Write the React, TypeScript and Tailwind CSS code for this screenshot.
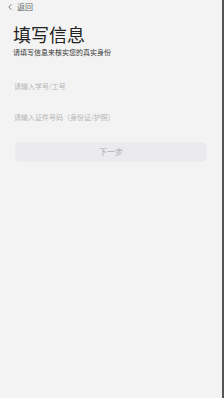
import { ChevronLeft } from "lucide-react";

export default function App() {
  return (
    <div
      className="flex h-[398px] w-[224px] flex-col border-r-2 border-r-[#555] bg-[#f3f3f3]"
      style={{ fontFamily: '"Noto Sans CJK SC", "Noto Sans", sans-serif' }}
    >
      <div className="flex items-center gap-[2px] pl-[5px] text-[#666]">
        <ChevronLeft className="h-[10px] w-[10px]" strokeWidth={2} />
        <span className="text-[8px] leading-[13px]">返回</span>
      </div>

      <div className="px-[13px]">
        <h1 className="mt-[10px] text-[18px] font-normal leading-[22px] text-[#222]">填写信息</h1>
        <p className="mt-[2px] text-[7px] leading-[10px] text-[#333]">请填写信息来核实您的真实身份</p>

        <div className="mt-[19px] flex h-[20px] items-center px-[1px] text-[7px] text-[#b5b5b5]">
          请输入学号/工号
        </div>
        <div className="mt-[11px] flex h-[20px] items-center px-[1px] text-[7px] text-[#b5b5b5]">
          请输入证件号码（身份证/护照）
        </div>

        <button className="ml-[2px] mt-[15px] flex h-[20px] w-[192px] items-center justify-center rounded-[5px] bg-[#ebebef] text-[8px] text-[#aaa]">
          下一步
        </button>
      </div>
    </div>
  );
}
